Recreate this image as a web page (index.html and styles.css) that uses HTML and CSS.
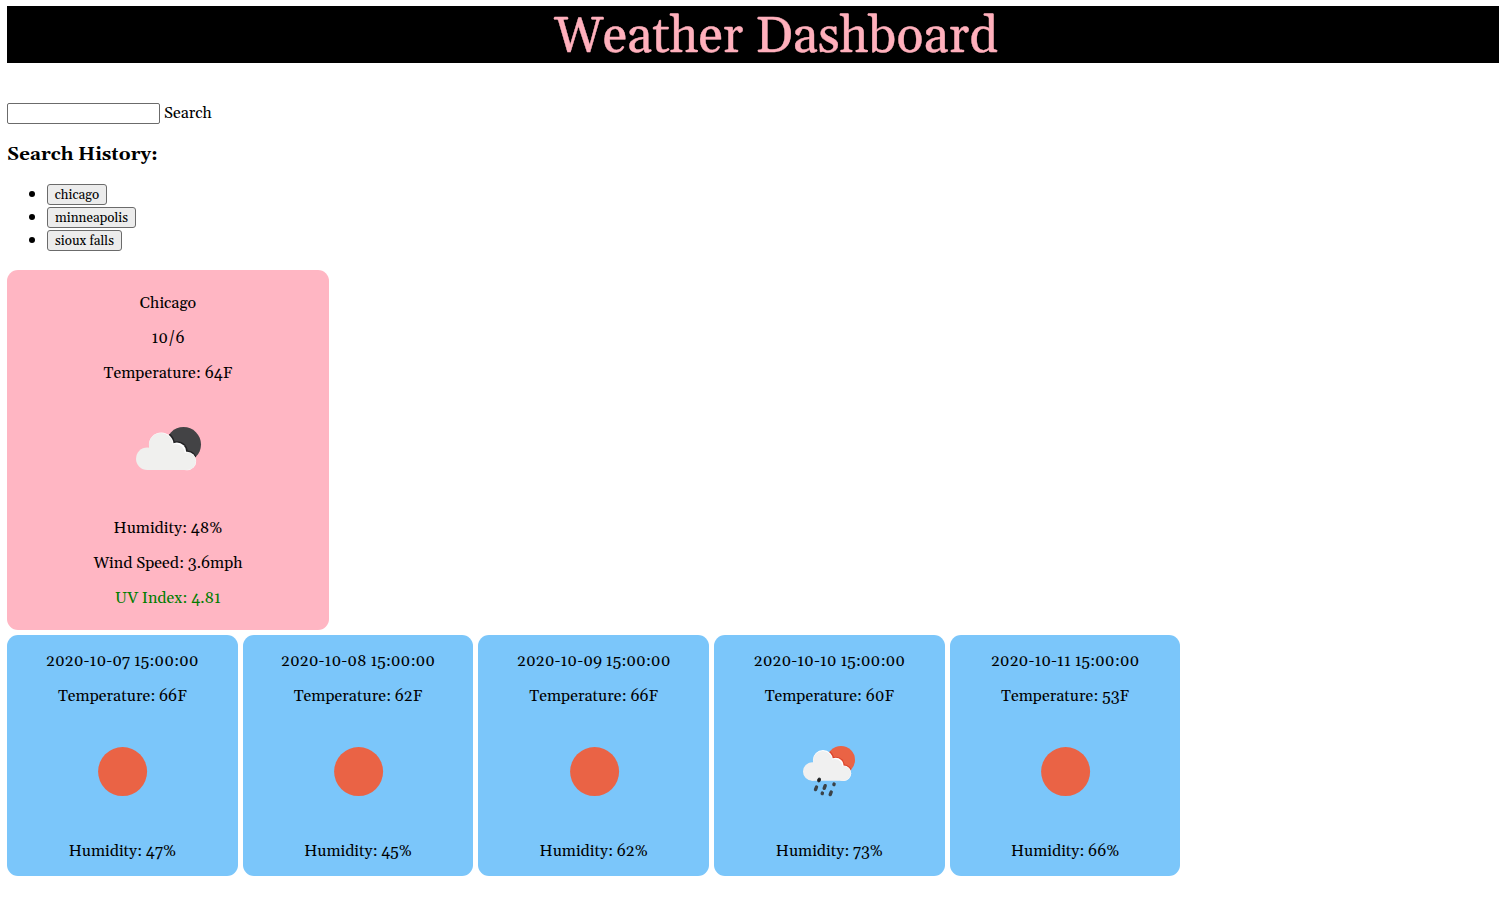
FILE: index.html
```html
<!DOCTYPE html>
<html lang="en">
<head>
<meta charset="utf-8">
<title>Weather Dashboard</title>
<link rel="stylesheet" href="styles.css">
</head>
<body>
<header class="title">Weather Dashboard</header>
<main>
<div class="search"><input class="search-input" type="text" aria-label="City"><span class="search-label">Search</span></div>
<h3 class="history-title">Search History:</h3>
<ul class="history">
<li><button class="b1">chicago</button></li>
<li><button class="b2">minneapolis</button></li>
<li><button class="b3">sioux falls</button></li>
</ul>
<section class="card current">
<p>Chicago</p>
<p>10/6</p>
<p>Temperature: 64F</p>
<svg class="icon" viewBox="0 0 100 100">
<defs><clipPath id="moon"><circle cx="65.500" cy="45.500" r="17.500"/></clipPath></defs>
<circle cx="65.500" cy="45.500" r="17.500" fill="#434345"/>
<g clip-path="url(#moon)" fill="#222224"><circle cx="43.200" cy="45.500" r="13.800"/><circle cx="59" cy="53" r="10.800"/><circle cx="69" cy="62.200" r="10.600"/></g>
<g fill="#fff"><circle cx="43.300" cy="45.800" r="12.300"/><circle cx="58.800" cy="53" r="9.500"/><circle cx="69" cy="62" r="9.200"/></g>
<g fill="#f0f0ee"><circle cx="29.300" cy="59.700" r="11.300"/><circle cx="42.800" cy="46" r="11.900"/><circle cx="57.600" cy="54.200" r="9.200"/><circle cx="69" cy="62.200" r="8.800"/><path d="M29 54H60L69 62V71H29Z"/></g>
</svg>
<p class="after-icon">Humidity: 48%</p>
<p>Wind Speed: 3.6mph</p>
<p class="uv">UV Index: 4.81</p>
</section>
<section class="forecast">
<article class="card day"><p>2020-10-07 15:00:00</p><p>Temperature: 66F</p><svg class="icon" viewBox="0 0 100 100"><circle cx="50.600" cy="49.600" r="24.500" fill="#ea6345"/></svg><p class="after-icon">Humidity: 47%</p></article>
<article class="card day"><p>2020-10-08 15:00:00</p><p>Temperature: 62F</p><svg class="icon" viewBox="0 0 100 100"><circle cx="50.600" cy="49.600" r="24.500" fill="#ea6345"/></svg><p class="after-icon">Humidity: 45%</p></article>
<article class="card day"><p>2020-10-09 15:00:00</p><p>Temperature: 66F</p><svg class="icon" viewBox="0 0 100 100"><circle cx="50.600" cy="49.600" r="24.500" fill="#ea6345"/></svg><p class="after-icon">Humidity: 62%</p></article>
<article class="card day"><p>2020-10-10 15:00:00</p><p>Temperature: 60F</p>
<svg class="icon" viewBox="0 0 100 100">
<defs><clipPath id="sun"><circle cx="61.500" cy="38" r="14"/></clipPath></defs>
<g transform="translate(.5 0)">
<circle cx="61.500" cy="38" r="14" fill="#ea6345"/>
<g clip-path="url(#sun)" fill="#dc432a"><circle cx="43.500" cy="38.100" r="11.300"/><circle cx="56.300" cy="43.600" r="8.900"/><circle cx="64" cy="51.200" r="8.900"/></g>
<g fill="#fff"><circle cx="43.500" cy="38.100" r="10.100"/><circle cx="56.200" cy="43.600" r="7.800"/><circle cx="64" cy="51.200" r="7.700"/></g>
<g fill="#f0f0f0"><circle cx="32.700" cy="49.500" r="9.200"/><circle cx="43.200" cy="38.600" r="9.600"/><circle cx="55.300" cy="44.600" r="7.600"/><circle cx="64" cy="51.400" r="7.300"/><path d="M32 45H57L64 51V58.700H32Z"/></g>
<path d="M39.900 57.300l-.6 1.400M37 65l-1 2.600M45.700 63.700l-1 2.600M54.600 62l-.2.600M42.900 71l-.2.600M51.700 70l-1 2.600" stroke="#3b4247" stroke-width="3.400" stroke-linecap="round"/>
<circle cx="39.500" cy="58" r="1.700" fill="#202020"/>
</g>
</svg><p class="after-icon">Humidity: 73%</p></article>
<article class="card day"><p>2020-10-11 15:00:00</p><p>Temperature: 53F</p><svg class="icon" viewBox="0 0 100 100"><circle cx="50.600" cy="49.600" r="24.500" fill="#ea6345"/></svg><p class="after-icon">Humidity: 66%</p></article>
</section>
</main>
</body>
</html>
```

FILE: styles.css
```css
* { box-sizing: border-box; }
body { margin: 6px 0 0 7px; background: #fff; color: #000; font: 16px/19px Georgia, Gelasio, "Liberation Serif", serif; }
.title { height: 57px; padding-left: 46px; background: #000; color: #ffb0bc; font-size: 50px; line-height: 63px; text-align: center; -webkit-text-stroke: .4px #ffb0bc; }
.search { display: flex; align-items: center; gap: 4px; height: 21px; margin-top: 40px; }
.search-input { width: 153px; height: 21px; border: 1px solid #6b6b6b; border-radius: 2px; background: #fff; }
.history-title { margin: 20px 0 19px; font-size: 18.720px; line-height: 21px; }
.history { margin: 0; padding-left: 40px; list-style: none; }
.history li { display: flex; align-items: flex-start; height: 23px; }
.history li::before { content: ""; width: 6px; height: 6px; margin: 7px 12px 0 -18px; border-radius: 50%; background: #000; }
.history button { display: block; height: 21px; padding: 2px 0 0; border: 1px solid #6b6b6b; border-radius: 3px; background: #ececec; color: #000; font: 13.333px/17px Georgia, Gelasio, "Liberation Serif", serif; }
.b1 { width: 60px; }
.b2 { width: 89px; }
.b3 { width: 75px; }
.card { display: flex; flex-direction: column; align-items: center; gap: 16px; border-radius: 11px; white-space: nowrap; }
.card p { margin: 0; }
.current { width: 322px; height: 360px; margin-top: 17px; padding-top: 24px; background: #ffb6c3; }
.icon { display: block; width: 100px; height: 100px; }
.card .after-icon { margin-top: 4px; }
.uv { color: #007d00; }
.forecast { display: grid; grid-template-columns: repeat(5, 230.700px); gap: 5px; margin-top: 5px; }
.day { height: 241px; padding-top: 17px; background: #7bc6fa; }
```
